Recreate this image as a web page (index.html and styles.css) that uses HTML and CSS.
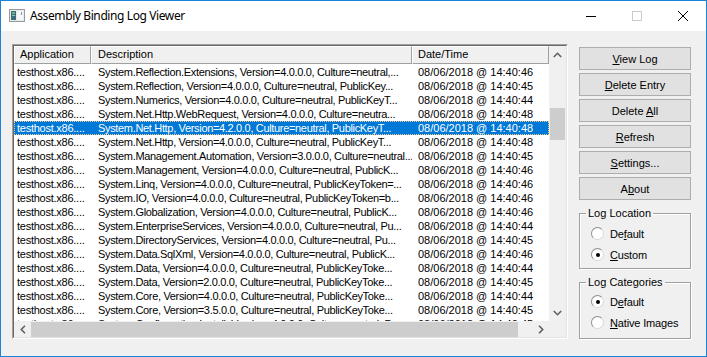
FILE: index.html
```html
<!DOCTYPE html>
<html lang="en">
<head>
    <meta charset="UTF-8">
    <title>Assembly Binding Log Viewer</title>
    <link rel="stylesheet" href="styles.css">
</head>
<body>
    <div class="window">
        <div class="titlebar">
            <svg class="app-icon" width="16" height="16" viewBox="0 0 16 16">
                <rect x="0.5" y="1.5" width="15" height="12" fill="#e8ecec" stroke="#9a9a9a"/>
                <rect x="2" y="3" width="5" height="9" fill="#3d6e78"/>
                <rect x="3" y="4" width="3" height="2" fill="#6fb07a"/>
                <rect x="3" y="7" width="3" height="1" fill="#8fc0c8"/>
                <rect x="8" y="3" width="6" height="9" fill="#f6f8f8"/>
                <rect x="12" y="4" width="1" height="3" fill="#7a9aa0"/>
            </svg>
            <span class="title">Assembly Binding Log Viewer</span>
            <div class="caption-buttons">
                <span class="cap">
                    <svg width="10" height="10" viewBox="0 0 10 10"><line x1="0" y1="5.5" x2="10" y2="5.5" stroke="#000"/></svg>
                </span>
                <span class="cap">
                    <svg width="10" height="10" viewBox="0 0 10 10"><rect x="0.5" y="0.5" width="9" height="9" fill="none" stroke="#cccccc"/></svg>
                </span>
                <span class="cap">
                    <svg width="10" height="10" viewBox="0 0 10 10"><path d="M0 0 L10 10 M10 0 L0 10" stroke="#000" stroke-width="1"/></svg>
                </span>
            </div>
        </div>

        <div class="client">
            <div class="listview">
                <div class="lv-inner">
                    <div class="lv-main">
                        <div class="lv-header">
                            <div class="hd col-app">Application</div>
                            <div class="hd col-desc">Description</div>
                            <div class="hd col-date">Date/Time</div>
                        </div>
                        <div class="lv-rows">
                            <div class="row"><span class="col-app">testhost.x86....</span><span class="col-desc">System.Reflection.Extensions, Version=4.0.0.0, Culture=neutral,...</span><span class="col-date">08/06/2018 @ 14:40:46</span></div>
                            <div class="row"><span class="col-app">testhost.x86....</span><span class="col-desc">System.Reflection, Version=4.0.0.0, Culture=neutral, PublicKey...</span><span class="col-date">08/06/2018 @ 14:40:45</span></div>
                            <div class="row"><span class="col-app">testhost.x86....</span><span class="col-desc">System.Numerics, Version=4.0.0.0, Culture=neutral, PublicKeyT...</span><span class="col-date">08/06/2018 @ 14:40:44</span></div>
                            <div class="row"><span class="col-app">testhost.x86....</span><span class="col-desc">System.Net.Http.WebRequest, Version=4.0.0.0, Culture=neutra...</span><span class="col-date">08/06/2018 @ 14:40:48</span></div>
                            <div class="row selected"><span class="col-app">testhost.x86....</span><span class="col-desc">System.Net.Http, Version=4.2.0.0, Culture=neutral, PublicKeyT...</span><span class="col-date">08/06/2018 @ 14:40:48</span></div>
                            <div class="row"><span class="col-app">testhost.x86....</span><span class="col-desc">System.Net.Http, Version=4.0.0.0, Culture=neutral, PublicKeyT...</span><span class="col-date">08/06/2018 @ 14:40:48</span></div>
                            <div class="row"><span class="col-app">testhost.x86....</span><span class="col-desc">System.Management.Automation, Version=3.0.0.0, Culture=neutral...</span><span class="col-date">08/06/2018 @ 14:40:45</span></div>
                            <div class="row"><span class="col-app">testhost.x86....</span><span class="col-desc">System.Management, Version=4.0.0.0, Culture=neutral, PublicK...</span><span class="col-date">08/06/2018 @ 14:40:46</span></div>
                            <div class="row"><span class="col-app">testhost.x86....</span><span class="col-desc">System.Linq, Version=4.0.0.0, Culture=neutral, PublicKeyToken=...</span><span class="col-date">08/06/2018 @ 14:40:46</span></div>
                            <div class="row"><span class="col-app">testhost.x86....</span><span class="col-desc">System.IO, Version=4.0.0.0, Culture=neutral, PublicKeyToken=b...</span><span class="col-date">08/06/2018 @ 14:40:46</span></div>
                            <div class="row"><span class="col-app">testhost.x86....</span><span class="col-desc">System.Globalization, Version=4.0.0.0, Culture=neutral, PublicK...</span><span class="col-date">08/06/2018 @ 14:40:46</span></div>
                            <div class="row"><span class="col-app">testhost.x86....</span><span class="col-desc">System.EnterpriseServices, Version=4.0.0.0, Culture=neutral, Pu...</span><span class="col-date">08/06/2018 @ 14:40:44</span></div>
                            <div class="row"><span class="col-app">testhost.x86....</span><span class="col-desc">System.DirectoryServices, Version=4.0.0.0, Culture=neutral, Pu...</span><span class="col-date">08/06/2018 @ 14:40:45</span></div>
                            <div class="row"><span class="col-app">testhost.x86....</span><span class="col-desc">System.Data.SqlXml, Version=4.0.0.0, Culture=neutral, PublicK...</span><span class="col-date">08/06/2018 @ 14:40:46</span></div>
                            <div class="row"><span class="col-app">testhost.x86....</span><span class="col-desc">System.Data, Version=4.0.0.0, Culture=neutral, PublicKeyToke...</span><span class="col-date">08/06/2018 @ 14:40:44</span></div>
                            <div class="row"><span class="col-app">testhost.x86....</span><span class="col-desc">System.Data, Version=2.0.0.0, Culture=neutral, PublicKeyToke...</span><span class="col-date">08/06/2018 @ 14:40:45</span></div>
                            <div class="row"><span class="col-app">testhost.x86....</span><span class="col-desc">System.Core, Version=4.0.0.0, Culture=neutral, PublicKeyToke...</span><span class="col-date">08/06/2018 @ 14:40:44</span></div>
                            <div class="row"><span class="col-app">testhost.x86....</span><span class="col-desc">System.Core, Version=3.5.0.0, Culture=neutral, PublicKeyToke...</span><span class="col-date">08/06/2018 @ 14:40:45</span></div>
                            <div class="row"><span class="col-app">testhost.x86....</span><span class="col-desc">System.Configuration.Install, Version=4.0.0.0, Culture=neutral, P...</span><span class="col-date">08/06/2018 @ 14:40:45</span></div>
                        </div>
                    </div>

                    <div class="vscroll">
                        <div class="sb-arrow">
                            <svg width="9" height="6" viewBox="0 0 9 6"><polyline points="0.8,5 4.5,1.3 8.2,5" fill="none" stroke="#606060" stroke-width="1.6"/></svg>
                        </div>
                        <div class="vtrack"><div class="vthumb"></div></div>
                        <div class="sb-arrow">
                            <svg width="9" height="6" viewBox="0 0 9 6"><polyline points="0.8,1 4.5,4.7 8.2,1" fill="none" stroke="#606060" stroke-width="1.6"/></svg>
                        </div>
                    </div>

                    <div class="hscroll">
                        <div class="sb-arrow">
                            <svg width="6" height="9" viewBox="0 0 6 9"><polyline points="5,0.8 1.3,4.5 5,8.2" fill="none" stroke="#606060" stroke-width="1.6"/></svg>
                        </div>
                        <div class="htrack"><div class="hthumb"></div></div>
                        <div class="sb-arrow">
                            <svg width="6" height="9" viewBox="0 0 6 9"><polyline points="1,0.8 4.7,4.5 1,8.2" fill="none" stroke="#606060" stroke-width="1.6"/></svg>
                        </div>
                    </div>

                    <div class="corner"></div>
                </div>
            </div>

            <div class="side">
                <button class="btn"><u>V</u>iew Log</button>
                <button class="btn"><u>D</u>elete Entry</button>
                <button class="btn">Delete <u>A</u>ll</button>
                <button class="btn"><u>R</u>efresh</button>
                <button class="btn"><u>S</u>ettings...</button>
                <button class="btn">A<u>b</u>out</button>

                <fieldset class="group group-location">
                    <legend>Log Location</legend>
                    <div class="radio"><span class="dot"></span>De<u>f</u>ault</div>
                    <div class="radio"><span class="dot checked"></span><u>C</u>ustom</div>
                </fieldset>

                <fieldset class="group group-categories">
                    <legend>Log Categories</legend>
                    <div class="radio"><span class="dot checked"></span>D<u>e</u>fault</div>
                    <div class="radio"><span class="dot"></span><u>N</u>ative Images</div>
                </fieldset>
            </div>
        </div>
    </div>
</body>
</html>
```

FILE: styles.css
```css
body {
    margin: 0;
    font-family: "Liberation Sans", Arial, sans-serif;
    font-size: 11px;
    color: #000;
}

.window {
    width: 707px;
    height: 357px;
    box-sizing: border-box;
    border: 1px solid #1883d7;
    background: #f0f0f0;
    display: flex;
    flex-direction: column;
}

/* title bar */

.titlebar {
    height: 30px;
    background: #fff;
    display: flex;
    align-items: center;
}

.app-icon {
    margin-left: 8px;
}

.title {
    margin-left: 5px;
    font-family: "Noto Sans", "Open Sans", sans-serif;
    font-size: 12px;
    letter-spacing: -0.4px;
    padding-bottom: 1px;
}

.caption-buttons {
    margin-left: auto;
    display: flex;
}

.cap {
    width: 46px;
    height: 30px;
    display: flex;
    align-items: center;
    justify-content: center;
}

/* client area */

.client {
    display: flex;
    gap: 11px;
    padding: 13px 15px 0 11px;
}

.listview {
    width: 556px;
    height: 295px;
    box-sizing: border-box;
    border: 1px solid;
    border-color: #a0a0a0 #fff #fff #a0a0a0;
}

.lv-inner {
    height: 100%;
    box-sizing: border-box;
    border: 1px solid;
    border-color: #696969 #e3e3e3 #e3e3e3 #696969;
    background: #fff;
    display: grid;
    grid-template-columns: 1fr 17px;
    grid-template-rows: 1fr 16px;
}

.lv-main {
    overflow: hidden;
}

.lv-header {
    display: flex;
    height: 18px;
}

.hd {
    box-sizing: border-box;
    height: 18px;
    line-height: 15px;
    background: #f0f0f0;
    border-top: 1px solid #fff;
    border-left: 1px solid #fff;
    border-right: 1px solid #a0a0a0;
    border-bottom: 1px solid #a0a0a0;
    white-space: nowrap;
    overflow: hidden;
}

.hd.col-app { padding-left: 5px; }
.hd.col-desc { padding-left: 6px; }
.hd.col-date { padding-left: 5px; }

.col-app { width: 77px; flex: none; }
.col-desc { width: 321px; flex: none; }
.col-date { width: 137px; flex: none; }

.lv-rows {
    padding-top: 1px;
}

.row {
    display: flex;
    height: 14px;
    line-height: 14px;
}

.row span {
    box-sizing: border-box;
    white-space: nowrap;
    overflow: hidden;
}

.row .col-app {
    padding-left: 3px;
    letter-spacing: -0.25px;
}

.row .col-desc {
    padding-left: 7px;
    letter-spacing: -0.33px;
}

.row .col-date { padding-left: 6px; }

.row.selected {
    background: #0078d7;
    color: #fff;
    outline: 1px dotted #f3c98b;
    outline-offset: -1px;
}

/* scrollbars */

.vscroll {
    background: #f0f0f0;
    display: flex;
    flex-direction: column;
}

.hscroll {
    background: #f0f0f0;
    display: flex;
}

.sb-arrow {
    width: 17px;
    height: 17px;
    flex: none;
    display: flex;
    align-items: center;
    justify-content: center;
}

.hscroll .sb-arrow {
    height: 16px;
}

.vtrack {
    flex: 1;
}

.vthumb {
    margin: 45px 1px 0;
    height: 32px;
    background: #cdcdcd;
}

.htrack {
    flex: 1;
    display: flex;
}

.hthumb {
    margin: 1px 0 0;
    width: 487px;
    background: #cdcdcd;
}

.corner {
    background: #f0f0f0;
}

/* buttons and groups */

.side {
    width: 112px;
    display: flex;
    flex-direction: column;
    padding-top: 3px;
}

.btn {
    height: 23px;
    margin: 0 0 3px;
    padding: 0;
    background: #e1e1e1;
    border: 1px solid #adadad;
    font-family: "Liberation Sans", Arial, sans-serif;
    font-size: 11px;
    color: #000;
}

.group {
    margin: 0;
    padding: 3px 0 3px;
    border: 1px solid #a0a0a0;
    box-shadow: inset 1px 1px 0 #fff, 1px 1px 0 #fff;
}

.group-location {
    margin-top: 4px;
}

.group-categories {
    margin-top: 7px;
    padding-top: 2px;
    padding-bottom: 5px;
}

.group legend {
    margin-left: 6px;
    padding: 0 2px;
    line-height: 13px;
}

.radio {
    height: 21px;
    display: flex;
    align-items: center;
    padding-left: 11px;
    letter-spacing: -0.15px;
}

.dot {
    width: 11px;
    height: 11px;
    margin-right: 6px;
    border: 1px solid #8c8c8c;
    border-color: #8c8c8c #d8d8d8 #d8d8d8 #8c8c8c;
    border-radius: 50%;
    background: #fff;
    display: flex;
    align-items: center;
    justify-content: center;
}

.dot.checked::after {
    content: "";
    width: 4px;
    height: 4px;
    border-radius: 50%;
    background: #000;
}
```
